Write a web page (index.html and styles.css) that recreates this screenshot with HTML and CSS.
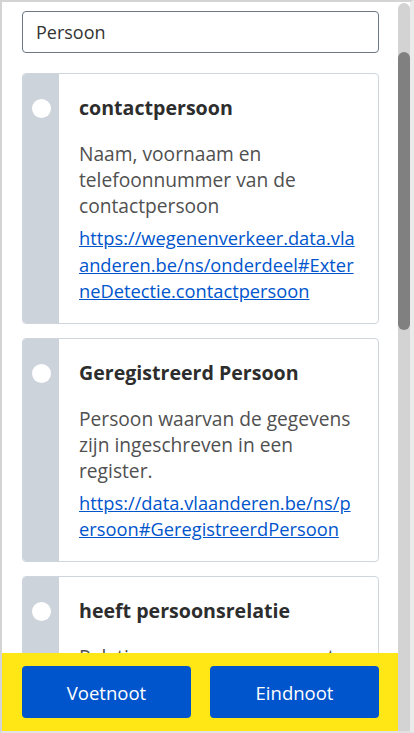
FILE: index.html
```html
<!DOCTYPE html>
<html lang="nl">
<head>
<meta charset="utf-8">
<title>Persoon</title>
<link rel="stylesheet" href="styles.css">
</head>
<body>
<div class="frame">
  <div class="pane">
    <div class="content">
      <input class="search" type="text" value="Persoon">
      <div class="card">
        <div class="card-side"><span class="radio"></span></div>
        <div class="card-body">
          <h2 class="card-title">contactpersoon</h2>
          <p class="card-desc">Naam, voornaam en telefoonnummer van de contactpersoon</p>
          <a class="card-link" href="#">https://wegenenverkeer.data.vlaanderen.be/ns/onderdeel#ExterneDetectie.contactpersoon</a>
        </div>
      </div>
      <div class="card">
        <div class="card-side"><span class="radio"></span></div>
        <div class="card-body">
          <h2 class="card-title">Geregistreerd Persoon</h2>
          <p class="card-desc">Persoon waarvan de gegevens zijn ingeschreven in een register.</p>
          <a class="card-link" href="#">https://data.vlaanderen.be/ns/persoon#GeregistreerdPersoon</a>
        </div>
      </div>
      <div class="card">
        <div class="card-side"><span class="radio"></span></div>
        <div class="card-body">
          <h2 class="card-title">heeft persoonsrelatie</h2>
          <p class="card-desc">Relatie van een persoon met een andere persoon (met vermelding van het type relatie).</p>
          <a class="card-link" href="#">https://data.vlaanderen.be/ns/persoon#heeftPersoonsrelatie</a>
        </div>
      </div>
    </div>
    <div class="footer">
      <button class="btn">Voetnoot</button>
      <button class="btn">Eindnoot</button>
    </div>
  </div>
  <div class="scrollbar"><div class="thumb"></div></div>
</div>
</body>
</html>
```

FILE: styles.css
```css
html, body {
  margin: 0;
  padding: 0;
  background: #ffffff;
}

body {
  font-family: "Open Sans", "Noto Sans", sans-serif;
  color: #333333;
}

.frame {
  width: 414px;
  height: 733px;
  box-sizing: border-box;
  border-top: 2px solid #d4d4d4;
  border-left: 2px solid #d4d4d4;
  border-right: 4px solid #ebebeb;
  border-bottom: 2px solid #e2e2e2;
  display: flex;
  background: #ffffff;
}

.pane {
  flex: 1;
  min-width: 0;
  display: flex;
  flex-direction: column;
}

.content {
  flex: 1;
  min-height: 0;
  overflow: hidden;
  padding: 9px 19px 0 20px;
}

.search {
  display: block;
  box-sizing: border-box;
  width: 100%;
  height: 42px;
  margin: 0 0 20px;
  padding: 0 13px;
  border: 1px solid #6b7785;
  border-radius: 4px;
  font-family: inherit;
  font-size: 18px;
  color: #333333;
  background: #ffffff;
  outline: none;
}

.card {
  display: flex;
  border: 1px solid #cfd5dd;
  border-radius: 4px;
  overflow: hidden;
  margin-bottom: 14px;
  background: #ffffff;
}

.card-side {
  width: 36px;
  flex: none;
  background: #cdd3db;
  display: flex;
  justify-content: center;
  padding-top: 25px;
}

.radio {
  width: 19px;
  height: 19px;
  border-radius: 50%;
  background: #ffffff;
}

.card-body {
  flex: 1;
  min-width: 0;
  padding: 20px 20px 18px 20px;
}

.card-title {
  margin: 0;
  font-size: 19.6px;
  line-height: 28px;
  font-weight: 700;
  color: #2d2d2d;
}

.card-desc {
  margin: 19px 0 6px;
  font-size: 19.2px;
  line-height: 26px;
  color: #505050;
}

.card-link {
  display: block;
  font-size: 18.3px;
  line-height: 26.5px;
  color: #0055cc;
  text-decoration: underline;
  word-break: break-all;
}

.footer {
  flex: none;
  background: #ffe615;
  padding: 13px 19px 13px 20px;
  display: grid;
  grid-template-columns: 1fr 1fr;
  column-gap: 19px;
}

.btn {
  height: 52px;
  border: none;
  border-radius: 4px;
  background: #0055cc;
  color: #ffffff;
  font-family: inherit;
  font-size: 18.5px;
  cursor: pointer;
}

.scrollbar {
  width: 12px;
  flex: none;
  margin-top: 1px;
  background: #d3d3d3;
  border-radius: 6px 6px 0 0;
  display: flex;
  flex-direction: column;
}

.thumb {
  margin-top: 49px;
  height: 278px;
  background: #808080;
  border-radius: 6px;
}
```
